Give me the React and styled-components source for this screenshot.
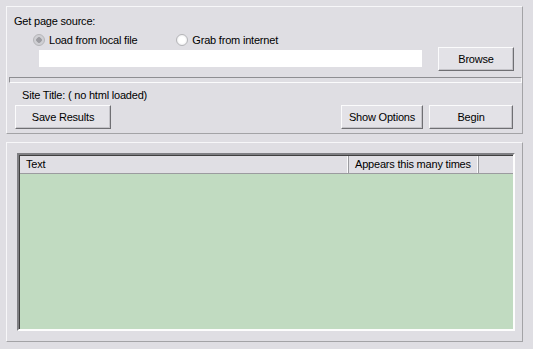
import React, { useState } from 'react';
import styled, { createGlobalStyle } from 'styled-components';

const GlobalStyle = createGlobalStyle`
    html, body {
        margin: 0;
        padding: 0;
        background: #dfdee3;
        font-family: "Liberation Sans", Arial, sans-serif;
        font-size: 11px;
        letter-spacing: -0.2px;
        color: #000;
    }
`;

const Window = styled.div`
    width: 533px;
    height: 349px;
    box-sizing: border-box;
    padding: 6px 10px 7px 6px;
    display: flex;
    flex-direction: column;
    gap: 8px;
`;

const Panel = styled.div`
    box-sizing: border-box;
    height: ${({ h }) => h}px;
    border: 1px solid;
    border-color: #f7f7f9 #a3a3a6 #a3a3a6 #f7f7f9;
    display: flex;
    flex-direction: column;
`;

const Label = styled.div`
    line-height: 13px;
    margin-top: ${({ top }) => top}px;
    margin-left: ${({ left }) => left}px;
`;

const RadioRow = styled.div`
    display: flex;
    align-items: center;
    margin-top: 5px;
    margin-left: 26px;
    height: 13px;
`;

const RadioOption = styled.label`
    display: flex;
    align-items: center;
    gap: 4px;
    margin-right: ${({ gap }) => gap || 0}px;
    cursor: default;
`;

const RadioDot = styled.span`
    box-sizing: border-box;
    width: 12px;
    height: 12px;
    border-radius: 50%;
    border: 1px solid #b5b5b8;
    background: ${({ checked }) =>
        checked
            ? 'radial-gradient(circle, #9d9da2 0 2.5px, #cfcfd3 3px)'
            : 'radial-gradient(circle, #ffffff 0 3px, #f0f0f2 5px)'};
`;

const SourceRow = styled.div`
    display: flex;
    align-items: center;
    margin-top: 1px;
    height: 23px;
`;

const PathInput = styled.div`
    width: 383px;
    height: 17px;
    margin-left: 32px;
    background: #fff;
`;

const Button = styled.button`
    box-sizing: border-box;
    width: ${({ w }) => w}px;
    height: 24px;
    padding: 0;
    margin-left: ${({ left }) => left || 0}px;
    background: #e3e2e7;
    border: 1px solid;
    border-color: #fbfbfc #6f6f73 #6f6f73 #fbfbfc;
    box-shadow: inset -1px -1px 0 #c4c3c8;
    font-family: "Liberation Sans", Arial, sans-serif;
    font-size: 11px;
    letter-spacing: -0.2px;
    color: #000;
    cursor: pointer;
`;

const Progress = styled.div`
    box-sizing: border-box;
    height: 6px;
    margin: 7px 0 0 2px;
    border: 1px solid;
    border-color: #8e8e92 #fbfbfc #fbfbfc #8e8e92;
`;

const ActionRow = styled.div`
    display: flex;
    align-items: center;
    margin-top: 3px;
    margin-left: 8px;
    margin-right: 9px;
    gap: 6px;
`;

const Spacer = styled.div`
    flex: 1;
`;

const ListBox = styled.div`
    box-sizing: border-box;
    margin: 10px 7px 10px 10px;
    flex: 1;
    display: flex;
    flex-direction: column;
    border: 2px solid;
    border-color: #7f7f83 #fdfdfd #fdfdfd #7f7f83;
    box-shadow: inset 1px 1px 0 #404040;
`;

const HeaderRow = styled.div`
    display: flex;
    height: 17px;
    margin: 1px 0 0 1px;
    background: #e0dfe4;
    border-bottom: 1px solid #9b9b9f;
`;

const HeaderCell = styled.div`
    box-sizing: border-box;
    width: ${({ w }) => (w ? `${w}px` : 'auto')};
    flex: ${({ w }) => (w ? 'none' : 1)};
    padding-left: ${({ pad }) => pad}px;
    line-height: 17px;
    border-right: ${({ last }) => (last ? 'none' : '1px solid #9b9b9f')};
    box-shadow: ${({ last }) => (last ? 'none' : 'inset -1px 0 0 #fbfbfc')};
`;

const ListBody = styled.div`
    flex: 1;
    margin-left: 1px;
    background: #c1dbc1;
`;

const App = () => {
    const [source, setSource] = useState('local');

    return (
        <>
            <GlobalStyle />
            <Window>
                <Panel h={128}>
                    <Label top={8} left={7}>Get page source:</Label>
                    <RadioRow>
                        <RadioOption gap={39} onClick={() => setSource('local')}>
                            <RadioDot checked={source === 'local'} />
                            Load from local file
                        </RadioOption>
                        <RadioOption onClick={() => setSource('web')}>
                            <RadioDot checked={source === 'web'} />
                            Grab from internet
                        </RadioOption>
                    </RadioRow>
                    <SourceRow>
                        <PathInput />
                        <Button w={76} left={16}>Browse</Button>
                    </SourceRow>
                    <Progress />
                    <Label top={6} left={15}>Site Title: ( no html loaded)</Label>
                    <ActionRow>
                        <Button w={96}>Save Results</Button>
                        <Spacer />
                        <Button w={82}>Show Options</Button>
                        <Button w={84}>Begin</Button>
                    </ActionRow>
                </Panel>
                <Panel h={200}>
                    <ListBox>
                        <HeaderRow>
                            <HeaderCell w={329} pad={6}>Text</HeaderCell>
                            <HeaderCell w={130} pad={6}>Appears this many times</HeaderCell>
                            <HeaderCell last />
                        </HeaderRow>
                        <ListBody />
                    </ListBox>
                </Panel>
            </Window>
        </>
    );
};

export default App;
